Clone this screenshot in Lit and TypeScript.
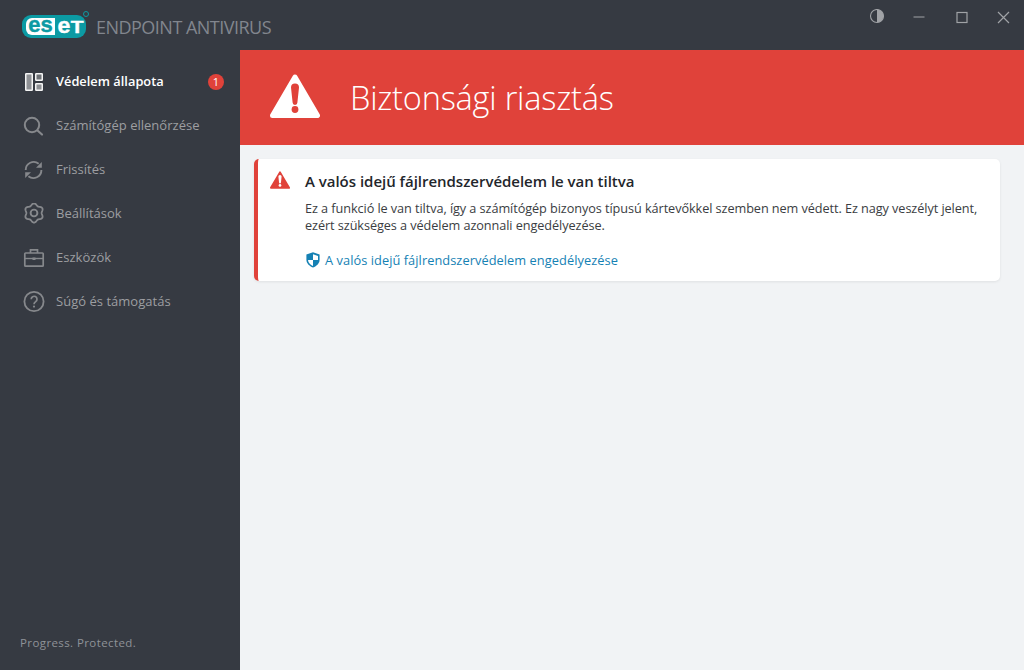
import { LitElement, html, css, svg } from "lit";
import { customElement } from "lit/decorators.js";

const gearPath = (() => {
  const pts: string[] = [];
  for (let i = 0; i < 96; i++) {
    const t = (i / 96) * Math.PI * 2;
    const r = 8.6 + 1.0 * Math.cos(6 * t);
    pts.push(`${(11 + r * Math.sin(t)).toFixed(2)} ${(10 - r * Math.cos(t)).toFixed(2)}`);
  }
  return `M${pts.join("L")}Z`;
})();

const icons: Record<string, unknown> = {
  status: svg`<rect x="2.750" y="2.750" width="6.500" height="16.500" rx=".5" fill="#8f9195" stroke="#f4f4f4" stroke-width="1.500"/><rect x="12.750" y="2.750" width="6.500" height="6.500" rx=".5" fill="#6f7277" stroke="#f4f4f4" stroke-width="1.500"/><rect x="12.750" y="12.750" width="6.500" height="6.500" rx=".5" fill="#8f9195" stroke="#f4f4f4" stroke-width="1.500"/>`,
  search: svg`<circle cx="9" cy="10" r="7.200" fill="none" stroke="currentColor" stroke-width="2"/><path d="M14.500 15.500l4.500 4" stroke="currentColor" stroke-width="2.200" stroke-linecap="round"/>`,
  refresh: svg`<path d="M2.700 11a8 8 0 0 1 13-6.300" fill="none" stroke="currentColor" stroke-width="1.900"/><path d="M13 8.800h5.800V3z" fill="currentColor"/><path d="M18.400 11a8 8 0 0 1-13 6.300" fill="none" stroke="currentColor" stroke-width="1.900"/><path d="M8 13.200H2.200V19z" fill="currentColor"/>`,
  gear: svg`<path d=${gearPath} fill="none" stroke="currentColor" stroke-width="1.800" stroke-linejoin="round"/><circle cx="11" cy="10" r="3.400" fill="none" stroke="currentColor" stroke-width="1.900"/>`,
  tools: svg`<rect x="1.800" y="6" width="18.400" height="13.200" rx=".8" fill="none" stroke="currentColor" stroke-width="1.700"/><path d="M7.500 6V2.800h7V6" fill="none" stroke="currentColor" stroke-width="1.700"/><path d="M1.800 11.500h18.400" stroke="currentColor" stroke-width="1.400"/><path d="M9.500 10.500h3v2.500h-3z" fill="currentColor"/>`,
  help: svg`<circle cx="11" cy="10.500" r="9.600" fill="none" stroke="currentColor" stroke-width="1.800"/><path d="M8.200 8.200a2.900 2.900 0 1 1 4.500 2.400c-1.100.8-1.700 1.300-1.700 2.600" fill="none" stroke="currentColor" stroke-width="1.700"/><circle cx="11" cy="15.600" r="1.100" fill="currentColor"/>`,
};

const nav = [
  { icon: "status", label: "Védelem állapota", active: true, badge: "1" },
  { icon: "search", label: "Számítógép ellenőrzése" },
  { icon: "refresh", label: "Frissítés" },
  { icon: "gear", label: "Beállítások" },
  { icon: "tools", label: "Eszközök" },
  { icon: "help", label: "Súgó és támogatás" },
];

const warn = (cls: string) => html`<svg class=${cls} viewBox="0 0 50 44"><path d="M25 3 47.500 41.500H2.500z" fill="currentColor" stroke="currentColor" stroke-width="5" stroke-linejoin="round"/><path class="mark" d="M21 13.500a4 4 0 0 1 8 0l-1.600 15a2.400 2.400 0 0 1-4.800 0z"/><circle class="mark" cx="25" cy="35.500" r="3.400"/></svg>`;

@customElement("app-root")
export class AppRoot extends LitElement {
  static styles = css`
    :host { display: block; width: 1024px; height: 670px; overflow: hidden; font-family: "Open Sans", "Noto Sans", sans-serif; background: #363a42; }
    .top { height: 50px; display: flex; align-items: flex-start; }
    .brand { display: flex; align-items: center; padding: 15px 0 0 22px; gap: 10px; }
    .logo { position: relative; display: flex; width: 64px; height: 23px; background: #0c9aa3; border-radius: 9px; box-sizing: border-box; padding: 3px 0 3px 4px; font: 700 22px/17px "Liberation Sans", sans-serif; }
    .logo-l { width: 29px; height: 17px; background: #fff; color: #0c9aa3; border-radius: 6px 0 0 6px; display: flex; justify-content: center; line-height: 14px; }
    .logo-r { flex: 1; color: #fff; display: flex; justify-content: center; line-height: 15px; }
    .wide { display: inline-block; -webkit-text-stroke: .4px currentColor; }
    .logo-r .wide { transform: scaleX(1.050); }
    .cap { font-size: 16px; transform: scaleX(1.250); display: inline-block; margin-left: 2px; }
    .reg { position: absolute; right: -3px; top: -4px; width: 4px; height: 4px; border-radius: 50%; border: 1px solid #0c9aa3; }
    .product { font: 400 18px/1 "Open Sans", sans-serif; color: #82868e; letter-spacing: -.52px; }
    .controls { margin-left: auto; display: flex; color: #a0a2a6; }
    .controls button { all: unset; width: 42px; height: 34px; display: flex; align-items: center; justify-content: center; }
    .controls svg { width: 16px; height: 16px; }
    .main { display: flex; height: 620px; }
    .side { width: 240px; display: flex; flex-direction: column; padding-top: 10px; box-sizing: border-box; }
    .item { display: flex; align-items: center; height: 44px; padding: 0 16px 0 23px; gap: 11px; color: #9d9ea1; font-size: 13px; }
    .item span:not(.badge) { margin-bottom: 2px; letter-spacing: .02px; }
    .item svg { width: 22px; height: 22px; flex: none; color: #86888c; }
    .item.active { color: #fff; font-weight: 600; font-size: 12.800px; }
    .badge { margin-left: auto; width: 16px; height: 16px; border-radius: 50%; background: #e0423a; color: #fff; font-size: 11px; font-weight: 400; line-height: 16px; text-align: center; }
    .slogan { margin-top: auto; padding: 0 0 19px 20px; font-size: 11.500px; line-height: 16px; color: #8f9298; letter-spacing: .4px; }
    .content { flex: 1; background: #f1f3f5; display: flex; flex-direction: column; }
    .hero { height: 95px; background: #e0423a; display: flex; align-items: center; padding-left: 30px; gap: 30px; color: #fff; flex: none; }
    .hero-icon { width: 50px; height: 44px; color: #fff; margin-bottom: 3px; }
    .hero-icon .mark { fill: #e0423a; }
    h1 { margin: 0 0 -1px; font: 300 32.500px/1 "Open Sans", sans-serif; letter-spacing: -.2px; }
    .card { margin: 14px 24px 0 14px; height: 122px; box-sizing: border-box; background: #fff; border-left: 4px solid #e0423a; border-radius: 5px; box-shadow: 0 1px 3px rgba(0,0,0,.08); display: flex; padding: 12px 16px 0 12px; gap: 15px; }
    .card-icon { width: 20px; height: 18px; color: #e0423a; flex: none; }
    .card-icon .mark { fill: #fff; }
    .body { flex: 1; min-width: 0; }
    h2 { margin: 0; font: 600 15px/20px "Open Sans", sans-serif; color: #23262b; letter-spacing: -.02px; }
    p { margin: 9px 0 0; font-size: 12.700px; line-height: 17px; color: #3a3d42; letter-spacing: -.07px; }
    a { display: flex; align-items: center; gap: 5px; margin-top: 17px; color: #1581b4; font-size: 12.800px; font-weight: 500; line-height: 18px; letter-spacing: .06px; }
    a svg { width: 14px; height: 16px; flex: none; margin-left: 1px; }
  `;

  render() {
    return html`
      <div class="top">
        <div class="brand">
          <div class="logo"><span class="logo-l"><span class="wide">es</span></span><span class="logo-r"><span class="wide">e<span class="cap">T</span></span></span><span class="reg"></span></div>
          <span class="product">ENDPOINT ANTIVIRUS</span>
        </div>
        <div class="controls">
          <button><svg viewBox="0 0 16 16"><circle cx="8" cy="7" r="6.500" fill="none" stroke="currentColor" stroke-width="1.100"/><path d="M8 .5a6.500 6.500 0 0 1 0 13z" fill="currentColor"/></svg></button>
          <button><svg viewBox="0 0 16 16"><path d="M2.500 8h11" stroke="currentColor" stroke-width="1"/></svg></button>
          <button><svg viewBox="0 0 16 16"><rect x="4" y="3.500" width="10" height="10" fill="none" stroke="currentColor" stroke-width="1.200"/></svg></button>
          <button><svg viewBox="0 0 16 16"><path d="M3 3l11 11M14 3L3 14" stroke="currentColor" stroke-width="1.200"/></svg></button>
        </div>
      </div>
      <div class="main">
        <nav class="side">
          ${nav.map((n) => html`<div class="item ${n.active ? "active" : ""}"><svg viewBox="0 0 22 22">${icons[n.icon]}</svg><span>${n.label}</span>${n.badge ? html`<span class="badge">${n.badge}</span>` : ""}</div>`)}
          <div class="slogan">Progress. Protected.</div>
        </nav>
        <section class="content">
          <header class="hero">${warn("hero-icon")}<h1>Biztonsági riasztás</h1></header>
          <article class="card">
            ${warn("card-icon")}
            <div class="body">
              <h2>A valós idejű fájlrendszervédelem le van tiltva</h2>
              <p>Ez a funkció le van tiltva, így a számítógép bizonyos típusú kártevőkkel szemben nem védett. Ez nagy veszélyt jelent, ezért szükséges a védelem azonnali engedélyezése.</p>
              <a><svg viewBox="0 0 14 16"><path d="M7 .3 13.600 2.600v5c0 3.800-2.800 6.600-6.600 8-3.800-1.400-6.600-4.200-6.600-8v-5z" fill="#1581b4"/><path d="M7 2.200l5 1.700V8H7zM7 8v6c-2.800-1.300-4.800-3.300-5-6z" fill="#fff"/></svg>A valós idejű fájlrendszervédelem engedélyezése</a>
            </div>
          </article>
        </section>
      </div>
    `;
  }
}
